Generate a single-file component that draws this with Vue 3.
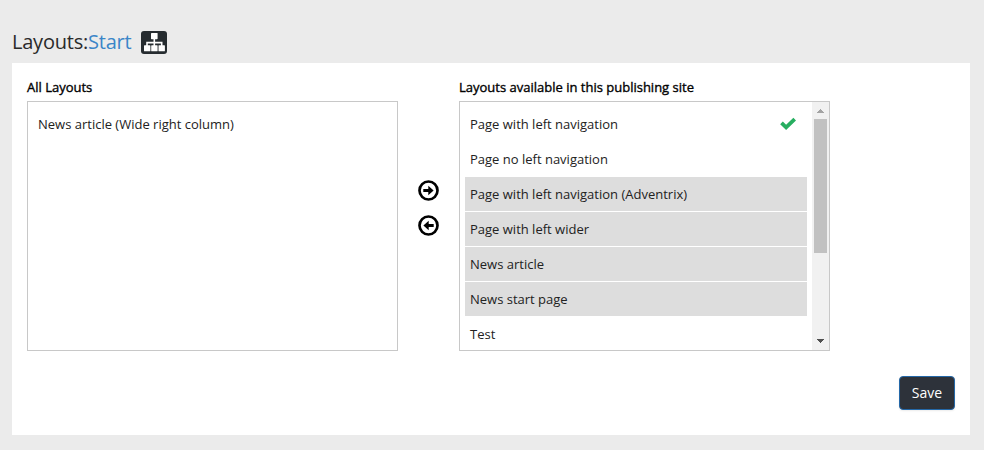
<script setup>
const allLayouts = ['News article (Wide right column)']
const siteLayouts = [
  { name: 'Page with left navigation', checked: true },
  { name: 'Page no left navigation' },
  { name: 'Page with left navigation (Adventrix)', selected: true },
  { name: 'Page with left wider', selected: true },
  { name: 'News article', selected: true },
  { name: 'News start page', selected: true },
  { name: 'Test' },
]
</script>

<template>
  <main class="page">
    <header class="heading">
      <h1>Layouts:<a>Start</a></h1>
      <button class="tree" aria-label="Site tree">
        <svg width="26" height="23" viewBox="0 0 26 23">
          <g fill="#fff">
            <rect x="10" y="2" width="6.6" height="6.2" rx=".6" />
            <rect x="3" y="14.2" width="6.4" height="6.1" rx=".6" />
            <rect x="10.2" y="14.2" width="6.4" height="6.1" rx=".6" />
            <rect x="17.5" y="14.2" width="6.4" height="6.1" rx=".6" />
          </g>
          <path d="M13.3 7.5V15M6 15v-3.4h14.7V15" fill="none" stroke="#fff" stroke-width="1.6" />
        </svg>
      </button>
    </header>
    <section class="panel">
      <div class="columns">
        <div class="column">
          <h2>All Layouts</h2>
          <div class="listbox">
            <ul>
              <li v-for="name in allLayouts" :key="name">{{ name }}</li>
            </ul>
          </div>
        </div>
        <div class="arrows">
          <button aria-label="Add">
            <svg width="21" height="21" viewBox="0 0 21 21">
              <circle cx="10.5" cy="10.5" r="9" fill="none" stroke="#000" stroke-width="2.7" />
              <path d="M5.3 9h5V5.8l5.3 4.7-5.3 4.7V12h-5z" />
            </svg>
          </button>
          <button aria-label="Remove">
            <svg width="21" height="21" viewBox="0 0 21 21">
              <circle cx="10.5" cy="10.5" r="9" fill="none" stroke="#000" stroke-width="2.7" />
              <path d="M15.7 9h-5V5.8l-5.3 4.7 5.3 4.7V12h5z" />
            </svg>
          </button>
        </div>
        <div class="column">
          <h2>Layouts available in this publishing site</h2>
          <div class="listbox">
            <ul>
              <li v-for="item in siteLayouts" :key="item.name" :class="{ selected: item.selected }">
                {{ item.name }}
                <svg v-if="item.checked" class="check" width="16" height="13" viewBox="0 0 16 13">
                  <path d="M1.5 5.9l4.6 4.4 8.6-8.2" fill="none" stroke="#27ae60" stroke-width="3.8" />
                </svg>
              </li>
            </ul>
            <div class="scrollbar">
              <svg width="17" height="17" viewBox="0 0 17 17" shape-rendering="crispEdges"><path d="M5 11l3.5-4L12 11z" fill="#a3a3a3" /></svg>
              <div class="track"><div class="thumb"></div></div>
              <svg width="17" height="17" viewBox="0 0 17 17" shape-rendering="crispEdges"><path d="M5 6l3.5 4L12 6z" fill="#505050" /></svg>
            </div>
          </div>
        </div>
      </div>
      <footer><button class="save">Save</button></footer>
    </section>
  </main>
</template>

<style>
body { background: #ebebeb; }
</style>

<style scoped>
* { box-sizing: border-box; }
.page {
  height: 450px;
  padding: 21px 14px 15px 12px;
  background: #ebebeb;
  font-family: "Open Sans", sans-serif;
  color: #222;
  overflow: hidden;
}
.heading { display: flex; align-items: center; height: 42px; gap: 10px; }
h1 { margin: 0; font-size: 20px; line-height: 42px; font-weight: 400; letter-spacing: -.22px; color: #2a2a2a; }
a { color: #3a85c8; }
button { padding: 0; border: 0; background: none; font-family: inherit; display: block; }
svg { display: block; }
.tree { width: 26px; height: 23px; border-radius: 3px; background: #262c30; }
.panel { height: 372px; padding: 15px; background: #fff; display: flex; flex-direction: column; }
.columns { display: flex; }
.column { width: 371px; }
h2 {
  margin: 0;
  height: 23px;
  font-size: 13px;
  line-height: 19px;
  font-weight: 400;
  color: #000;
  -webkit-text-stroke: .35px #000;
  white-space: nowrap;
}
.listbox { height: 250px; border: 1px solid #c8c8c8; display: flex; overflow: hidden; }
ul { flex: 1; margin: 0; padding: 5px; list-style: none; }
li {
  display: flex;
  justify-content: space-between;
  height: 34px;
  margin-bottom: 1px;
  padding: 0 5px;
  font-size: 13px;
  line-height: 34px;
}
.selected { background: #ddd; }
.check { margin: 10px 6px 0 0; }
.scrollbar { width: 17px; background: #f1f1f1; display: flex; flex-direction: column; }
.track { flex: 1; padding: 0 2px; }
.thumb { height: 134px; background: #c1c1c1; }
.arrows { width: 61px; padding-top: 102px; display: flex; flex-direction: column; align-items: center; gap: 14px; }
footer { display: flex; justify-content: flex-end; padding-top: 25px; }
.save {
  width: 56px;
  height: 34px;
  padding-bottom: 2px;
  border: 1px solid #2468a8;
  border-radius: 4px;
  background: #2d323a;
  color: #fff;
  font-size: 14px;
  box-shadow: 0 1px 2px rgba(0, 0, 0, .08);
}
</style>
